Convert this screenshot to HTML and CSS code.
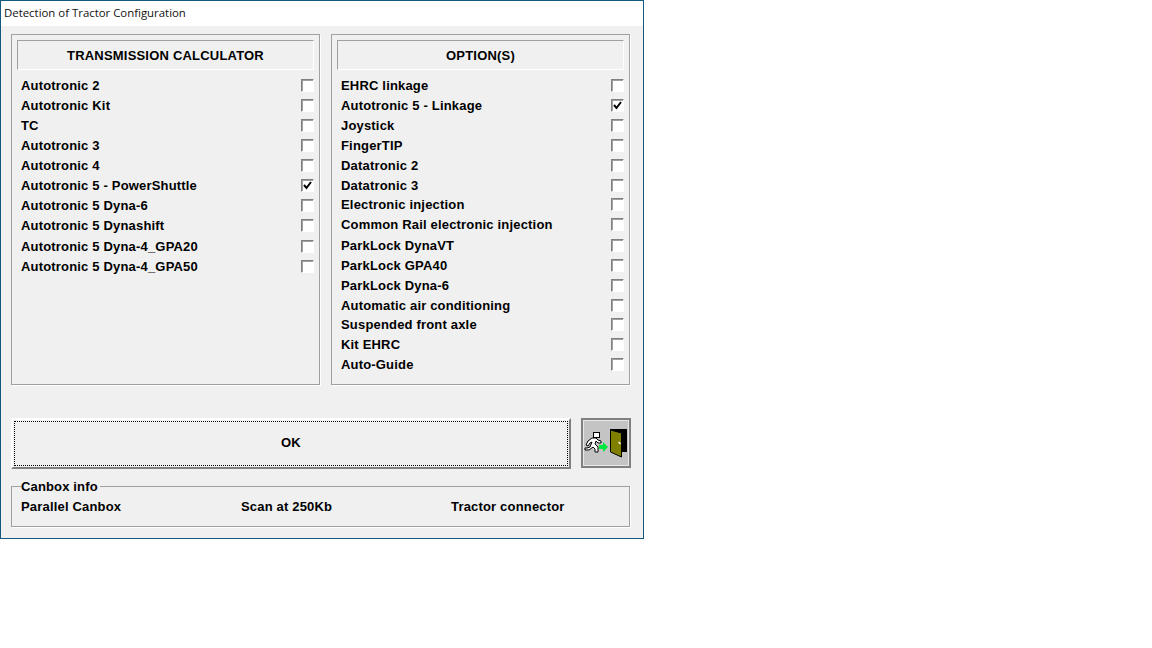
FILE: index.html
```html
<!DOCTYPE html>
<html lang="en">
<head>
    <meta charset="UTF-8">
    <title>Detection of Tractor Configuration</title>
    <link rel="stylesheet" href="styles.css">
</head>
<body>
    <div class="window">
        <div class="title-bar">Detection of Tractor Configuration</div>
        <div class="client">
            <div class="panels">
                <section class="panel panel-left">
                    <h2 class="panel-title">TRANSMISSION CALCULATOR</h2>
                    <div class="list">
                        <label class="row"><span>Autotronic 2</span><i class="check"></i></label>
                        <label class="row"><span>Autotronic Kit</span><i class="check"></i></label>
                        <label class="row"><span>TC</span><i class="check"></i></label>
                        <label class="row"><span>Autotronic 3</span><i class="check"></i></label>
                        <label class="row"><span>Autotronic 4</span><i class="check"></i></label>
                        <label class="row"><span>Autotronic 5 - PowerShuttle</span><i class="check"><svg viewBox="0 0 9 9" width="9" height="9"><path d="M1 4l2.5 3L8 1" fill="none" stroke="#000" stroke-width="2"/></svg></i></label>
                        <label class="row"><span>Autotronic 5 Dyna-6</span><i class="check"></i></label>
                        <label class="row row-tall"><span>Autotronic 5 Dynashift</span><i class="check"></i></label>
                        <label class="row"><span>Autotronic 5 Dyna-4_GPA20</span><i class="check"></i></label>
                        <label class="row"><span>Autotronic 5 Dyna-4_GPA50</span><i class="check"></i></label>
                    </div>
                </section>

                <section class="panel panel-right">
                    <h2 class="panel-title">OPTION(S)</h2>
                    <div class="list">
                        <label class="row"><span>EHRC linkage</span><i class="check"></i></label>
                        <label class="row"><span>Autotronic 5 - Linkage</span><i class="check"><svg viewBox="0 0 9 9" width="9" height="9"><path d="M1 4l2.5 3L8 1" fill="none" stroke="#000" stroke-width="2"/></svg></i></label>
                        <label class="row"><span>Joystick</span><i class="check"></i></label>
                        <label class="row"><span>FingerTIP</span><i class="check"></i></label>
                        <label class="row"><span>Datatronic 2</span><i class="check"></i></label>
                        <label class="row"><span>Datatronic 3</span><i class="check"></i></label>
                        <label class="row row-short"><span>Electronic injection</span><i class="check"></i></label>
                        <label class="row row-tall"><span>Common Rail electronic injection</span><i class="check"></i></label>
                        <label class="row"><span>ParkLock DynaVT</span><i class="check"></i></label>
                        <label class="row row-tall"><span>ParkLock GPA40</span><i class="check"></i></label>
                        <label class="row row-short"><span>ParkLock Dyna-6</span><i class="check"></i></label>
                        <label class="row"><span>Automatic air conditioning</span><i class="check"></i></label>
                        <label class="row row-short"><span>Suspended front axle</span><i class="check"></i></label>
                        <label class="row"><span>Kit EHRC</span><i class="check"></i></label>
                        <label class="row"><span>Auto-Guide</span><i class="check"></i></label>
                    </div>
                </section>
            </div>

            <div class="actions">
                <button class="ok-button"><span class="focus-ring">OK</span></button>
                <button class="exit-button" aria-label="Exit">
                    <svg viewBox="0 0 46 46" width="46" height="46">
                        <!-- door -->
                        <rect x="27" y="9" width="17" height="23" fill="#000"/>
                        <path d="M27.5 10l11 3v24l-11-5z" fill="#808000" stroke="#000"/>
                        <path d="M35.5 22l2 2" stroke="#fff" stroke-width="1.2"/>
                        <!-- arrow -->
                        <path d="M16 25h4v-3l5 5-5 5v-3h-4z" fill="#00e83a"/>
                        <!-- runner -->
                        <rect x="10.5" y="12.5" width="6" height="5" fill="#fff" stroke="#000"/>
                        <path d="M9 18l-4 3-2 4 2 1 2-3 2-1-2 5-3 1H2v2h4l4-3 2 2v3h3v-5l-3-3 1-3 2 2h3v-2l-3-1-2-2z" fill="#fff" stroke="#000"/>
                    </svg>
                </button>
            </div>

            <fieldset class="canbox">
                <legend>Canbox info</legend>
                <div class="canbox-items">
                    <span>Parallel Canbox</span>
                    <span>Scan at 250Kb</span>
                    <span>Tractor connector</span>
                </div>
            </fieldset>
        </div>
    </div>
</body>
</html>
```

FILE: styles.css
```css
* {
    margin: 0;
    padding: 0;
    box-sizing: border-box;
}

body {
    background: #fff;
    font-family: "Liberation Sans", Arial, sans-serif;
    font-size: 13px;
    font-weight: bold;
    color: #000;
}

.window {
    width: 644px;
    height: 539px;
    border: 1px solid #15587f;
    display: flex;
    flex-direction: column;
}

.title-bar {
    height: 25px;
    padding: 4px 0 0 3px;
    font-family: "Open Sans", sans-serif;
    font-size: 11.4px;
    font-weight: normal;
    line-height: 16px;
    color: #111;
    background: #fff;
}

.client {
    flex: 1;
    background: #f0f0f0;
    padding: 8px 0 0 10px;
}

.panels {
    display: flex;
    gap: 11px;
}

.panel {
    height: 351px;
    padding: 5px;
    border: 1px solid #a0a0a0;
    box-shadow: 1px 1px 0 #fff;
}

.panel-left {
    width: 309px;
}

.panel-right {
    width: 299px;
}

.panel-title {
    height: 30px;
    font-size: 13px;
    line-height: 29px;
    letter-spacing: 0.2px;
    text-align: center;
    border: 1px solid;
    border-color: #a0a0a0 #fff #fff #a0a0a0;
}

.list {
    padding: 5px 0 0 4px;
}

.row {
    display: flex;
    justify-content: space-between;
    align-items: center;
    height: 20px;
    letter-spacing: 0.18px;
}

.row-tall {
    height: 21px;
}

.row-short {
    height: 19px;
}

.check {
    width: 13px;
    height: 13px;
    display: flex;
    align-items: center;
    justify-content: center;
    background: #fff;
    border: 1px solid;
    border-color: #808080 #fff #fff #808080;
    box-shadow: inset 1px 1px 0 #a0a0a0;
}

.actions {
    display: flex;
    align-items: flex-start;
    gap: 10px;
    margin-top: 33px;
}

.ok-button {
    width: 560px;
    height: 51px;
    padding: 1px;
    font: inherit;
    letter-spacing: 0.2px;
    background: #f0f0f0;
    border: 2px solid;
    border-color: #fff #808080 #808080 #fff;
}

.focus-ring {
    display: flex;
    align-items: center;
    justify-content: center;
    height: 100%;
    padding-bottom: 2px;
    border: 1px dotted #000;
}

.exit-button {
    width: 50px;
    height: 50px;
    display: flex;
    align-items: center;
    justify-content: center;
    background: #c4c4c4;
    border: 2px solid #808080;
    box-shadow: inset 1px 1px 0 #e8e8e8, inset -1px -1px 0 #e8e8e8;
}

.canbox {
    width: 619px;
    height: 48px;
    margin-top: 10px;
    padding: 0 0 0 9px;
    border: 1px solid #a0a0a0;
    box-shadow: 1px 1px 0 #fff;
}

.canbox legend {
    padding: 0 2px 0 0;
    line-height: 15px;
    letter-spacing: 0.15px;
}

.canbox-items {
    display: grid;
    grid-template-columns: 220px 210px 1fr;
    margin-top: 5px;
    line-height: 16px;
    letter-spacing: 0.18px;
}
```
